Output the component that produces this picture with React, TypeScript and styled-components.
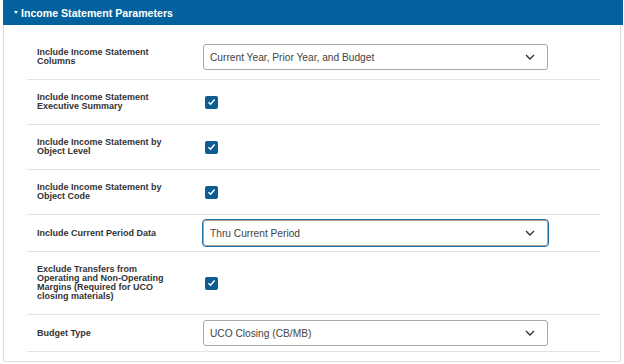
import React from "react";
import styled, { createGlobalStyle } from "styled-components";

const GlobalStyle = createGlobalStyle`
  html, body { margin: 0; padding: 0; background: #ffffff; }
  body { font-family: "Liberation Sans", Arial, sans-serif; }
  * { box-sizing: border-box; }
`;

const Panel = styled.section`
  width: 618px;
  margin-left: 3px;
`;

const Header = styled.div`
  width: 620px;
  height: 25px;
  background: #03629d;
  color: #ffffff;
  display: flex;
  align-items: center;
  gap: 2px;
  padding-left: 11px;
  font-size: 10.6px;
  font-weight: bold;
`;

const Caret = styled.span`
  width: 0;
  height: 0;
  border-left: 2.5px solid transparent;
  border-right: 2.5px solid transparent;
  border-top: 3px solid #ffffff;
  margin-right: 1px;
`;

const Body = styled.div`
  border: 1px solid #dedede;
  border-top: none;
  border-radius: 0 0 3px 3px;
  padding: 10px 20px 9px 23px;
`;

const Row = styled.div`
  display: grid;
  grid-template-columns: 176px 1fr;
  align-items: center;
  border-bottom: 1px solid #e4e4e4;
`;

const Label = styled.div`
  padding: 13px 30px 13px 10px;
  font-size: 9px;
  line-height: 9px;
  font-weight: bold;
  color: #333333;
`;

const Control = styled.div`
  padding: 5px 0;
  display: flex;
  align-items: center;
`;

const SelectBox = styled.div<{ $focused?: boolean }>`
  position: relative;
  width: 345px;
  height: 26px;
  border: 1px solid #a8a8a8;
  border-radius: 3px;
  display: flex;
  align-items: center;
  padding-left: 6px;
  font-size: 10.2px;
  color: #444444;
  background: #ffffff;
  outline: ${(p) => (p.$focused ? "1.5px solid #1f6fa6" : "none")};
  outline-offset: 0.5px;
`;

const Chevron = styled.svg`
  position: absolute;
  right: 12px;
  top: 50%;
  margin-top: -3px;
`;

const Check = styled.span`
  width: 13px;
  height: 13px;
  margin-left: 2px;
  border-radius: 2px;
  background: #0d5d91;
  display: flex;
  align-items: center;
  justify-content: center;
`;

const Select = ({ value, focused }: { value: string; focused?: boolean }) => (
  <SelectBox $focused={focused}>
    {value}
    <Chevron width="10" height="6" viewBox="0 0 10 6">
      <polyline points="1,1 5,5 9,1" fill="none" stroke="#333" strokeWidth="1.4" />
    </Chevron>
  </SelectBox>
);

const Checkbox = () => (
  <Check>
    <svg width="9" height="8" viewBox="0 0 9 8">
      <polyline points="1.5,4.2 3.6,6.2 7.6,1.6" fill="none" stroke="#fff" strokeWidth="1.5" />
    </svg>
  </Check>
);

type Item = { label: string; kind: "select" | "check"; value?: string; focused?: boolean };

const items: Item[] = [
  { label: "Include Income Statement Columns", kind: "select", value: "Current Year, Prior Year, and Budget" },
  { label: "Include Income Statement Executive Summary", kind: "check" },
  { label: "Include Income Statement by Object Level", kind: "check" },
  { label: "Include Income Statement by Object Code", kind: "check" },
  { label: "Include Current Period Data", kind: "select", value: "Thru Current Period", focused: true },
  {
    label: "Exclude Transfers from Operating and Non-Operating Margins (Required for UCO closing materials)",
    kind: "check",
  },
  { label: "Budget Type", kind: "select", value: "UCO Closing (CB/MB)" },
];

export default function App() {
  return (
    <>
      <GlobalStyle />
      <Panel>
        <Header>
          <Caret />
          Income Statement Parameters
        </Header>
        <Body>
          {items.map((it) => (
            <Row key={it.label}>
              <Label>{it.label}</Label>
              <Control>
                {it.kind === "select" ? <Select value={it.value!} focused={it.focused} /> : <Checkbox />}
              </Control>
            </Row>
          ))}
        </Body>
      </Panel>
    </>
  );
}
